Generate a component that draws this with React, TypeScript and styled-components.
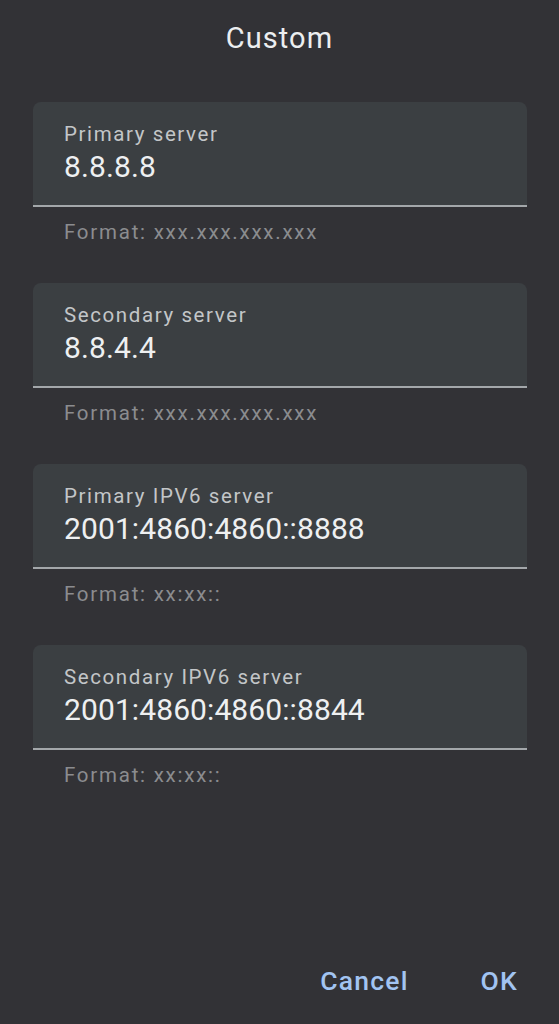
import React from "react";
import styled, { createGlobalStyle } from "styled-components";

const GlobalStyle = createGlobalStyle`
    html, body {
        margin: 0;
        padding: 0;
        background: #323236;
    }
    * {
        box-sizing: border-box;
    }
`;

const Page = styled.div`
    width: 559px;
    height: 1024px;
    display: flex;
    flex-direction: column;
    background: #323236;
    font-family: Roboto, "Noto Sans", sans-serif;
    overflow: hidden;
`;

const Title = styled.h1`
    margin: 0;
    height: 102px;
    padding-top: 20px;
    text-align: center;
    font-size: 29px;
    line-height: 36px;
    font-weight: 400;
    color: #eceef0;
    letter-spacing: 1.1px;
`;

const Fields = styled.div`
    display: flex;
    flex-direction: column;
    gap: 38px;
    padding: 0 32px 0 33px;
`;

const FieldGroup = styled.div`
    display: flex;
    flex-direction: column;
`;

const FieldBox = styled.div`
    height: 105px;
    padding: 19px 31px 0;
    background: #3b3f42;
    border-radius: 8px 8px 0 0;
    border-bottom: 2px solid #a3a7aa;
    display: flex;
    flex-direction: column;
`;

const Label = styled.label`
    font-size: 20.5px;
    line-height: 26px;
    letter-spacing: 1.6px;
    color: #c3c6c8;
`;

const Value = styled.div`
    margin-top: 2px;
    font-size: 30px;
    line-height: 36px;
    letter-spacing: 0.1px;
    color: #eef0f1;
`;

const Helper = styled.div`
    margin-top: 12px;
    padding-left: 31px;
    font-size: 20.5px;
    line-height: 26px;
    letter-spacing: 1.75px;
    color: #8b8c8f;
`;

const Footer = styled.div`
    margin-top: auto;
    display: flex;
    justify-content: flex-end;
    align-items: center;
    gap: 72px;
    padding: 0 41px 26px 0;
`;

const TextButton = styled.button`
    background: none;
    border: none;
    padding: 0;
    font-family: Roboto, "Noto Sans", sans-serif;
    font-size: 26.5px;
    line-height: 34px;
    font-weight: 500;
    letter-spacing: 1.2px;
    color: #a2c4f2;
    cursor: pointer;
`;

const servers = [
    { label: "Primary server", value: "8.8.8.8", format: "xxx.xxx.xxx.xxx" },
    { label: "Secondary server", value: "8.8.4.4", format: "xxx.xxx.xxx.xxx" },
    { label: "Primary IPV6 server", value: "2001:4860:4860::8888", format: "xx:xx::" },
    { label: "Secondary IPV6 server", value: "2001:4860:4860::8844", format: "xx:xx::" },
];

export default function App() {
    return (
        <Page>
            <GlobalStyle />
            <Title>Custom</Title>
            <Fields>
                {servers.map((s) => (
                    <FieldGroup key={s.label}>
                        <FieldBox>
                            <Label>{s.label}</Label>
                            <Value>{s.value}</Value>
                        </FieldBox>
                        <Helper>Format: {s.format}</Helper>
                    </FieldGroup>
                ))}
            </Fields>
            <Footer>
                <TextButton>Cancel</TextButton>
                <TextButton>OK</TextButton>
            </Footer>
        </Page>
    );
}
